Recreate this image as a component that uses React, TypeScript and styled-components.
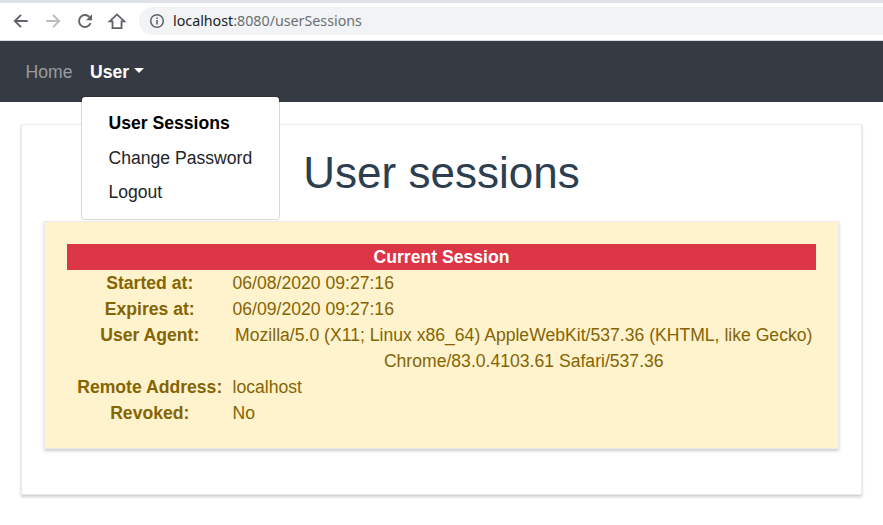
import React from "react";
import styled, { createGlobalStyle } from "styled-components";

const GlobalStyle = createGlobalStyle`
  * { box-sizing: border-box; }
  body {
    margin: 0;
    background: #fff;
    color: #212529;
    font: 17.6px/26px "Liberation Sans", Arial, sans-serif;
  }
`;

const Page = styled.div`
  display: flow-root;
  min-height: 525px;
`;

const TabStrip = styled.div`
  height: 3px;
  background: #dee1e6;
`;

const Toolbar = styled.div`
  display: flex;
  align-items: center;
  height: 38px;
  padding-left: 11px;
  border-bottom: 1px solid #dadce0;
  background: #fff;
`;

const ToolButton = styled.span<{ $disabled?: boolean }>`
  display: flex;
  width: 20px;
  height: 20px;
  margin: 0 12px 1px 0;
  color: ${(p) => (p.$disabled ? "#babcbe" : "#5f6368")};
`;

const AddressBar = styled.div`
  display: flex;
  flex: 1;
  align-items: center;
  height: 28px;
  margin-bottom: 1px;
  padding-left: 10px;
  border-radius: 14px 0 0 14px;
  background: #f1f3f4;
  color: #5f6368;
`;

const Url = styled.span`
  margin-left: 8px;
  color: #6b6f73;
  font: 14.25px/20px "Noto Sans", sans-serif;
`;

const Host = styled.span`
  color: #202124;
`;

const Navbar = styled.nav`
  display: flex;
  align-items: center;
  gap: 17.5px;
  height: 61px;
  padding: 1px 0 0 25.5px;
  background: #363a42;
`;

const NavLink = styled.span<{ $active?: boolean }>`
  color: ${(p) => (p.$active ? "#fff" : "#9a9c9f")};
  font-weight: ${(p) => (p.$active ? 700 : 400)};
`;

const UserItem = styled.div`
  position: relative;
  display: flex;
  align-items: center;
`;

const Caret = styled.span`
  margin: -3px 0 0 5px;
  border: 5px solid transparent;
  border-top-color: #fff;
  border-bottom: 0;
`;

const Menu = styled.div`
  position: absolute;
  top: 37px;
  left: -9px;
  z-index: 1;
  width: 199px;
  height: 124px;
  padding: 9.3px 0;
  border: 1px solid rgba(0, 0, 0, 0.15);
  border-radius: 4px;
  background: #fff;
  background-clip: padding-box;
`;

const MenuItem = styled.div<{ $active?: boolean }>`
  height: 34.4px;
  padding: 4px 26.5px;
  color: ${(p) => (p.$active ? "#000" : "#212529")};
  font-weight: ${(p) => (p.$active ? 700 : 400)};
  white-space: nowrap;
`;

const Card = styled.section`
  padding: 22px;
  border: 1px solid #ebebeb;
  box-shadow: 0 2px 3px rgba(0, 0, 0, 0.2);
`;

const PageCard = styled(Card)`
  height: 371px;
  margin: 22px 21px 0;
`;

const Title = styled.h1`
  margin: 0 0 23px;
  color: #2c3e50;
  font-size: 44px;
  font-weight: 400;
  line-height: 51px;
  text-align: center;
`;

const SessionCard = styled(Card)`
  height: 228px;
  background: #fff3cd;
  color: #856404;
`;

const SessionHeader = styled.div`
  height: 26px;
  background: #dc3545;
  color: #fff;
  font-weight: 700;
  text-align: center;
`;

const Details = styled.dl`
  display: grid;
  grid-template-columns: 165.5px 1fr;
  margin: 0;
`;

const Label = styled.dt`
  font-weight: 700;
  text-align: center;
`;

const Value = styled.dd<{ $centered?: boolean }>`
  margin: 0;
  padding-right: ${(p) => (p.$centered ? "1px" : "0")};
  text-align: ${(p) => (p.$centered ? "center" : "left")};
`;

const BackIcon = () => (
  <svg width="20" height="20" viewBox="0 0 20 20" fill="none" stroke="currentColor" strokeWidth="1.9">
    <path d="M16.7 10H4.2M10 3.8 3.8 10l6.2 6.2" />
  </svg>
);

const ForwardIcon = () => (
  <svg width="20" height="20" viewBox="0 0 20 20" fill="none" stroke="currentColor" strokeWidth="1.9">
    <path d="M3.3 10h12.5M10 3.8l6.2 6.2-6.2 6.2" />
  </svg>
);

const ReloadIcon = () => (
  <svg width="20" height="20" viewBox="0 0 20 20" fill="none" stroke="currentColor" strokeWidth="1.9">
    <path d="M15.6 12.2A6 6 0 1 1 14.3 5.8" />
    <path d="M17 3.2v6.1h-6.1z" fill="currentColor" stroke="none" />
  </svg>
);

const HomeIcon = () => (
  <svg width="20" height="20" viewBox="0 0 20 20" fill="none" stroke="currentColor" strokeWidth="1.8">
    <path d="M2.7 10.4H5.5v6.7h9v-6.7h2.8L10 3.4z" />
  </svg>
);

const InfoIcon = () => (
  <svg width="16" height="16" viewBox="0 0 16 16" fill="none" stroke="currentColor" strokeWidth="1.5">
    <circle cx="8" cy="8" r="6.3" />
    <path d="M8 7.1v4.3M8 4.5V6" strokeWidth="1.6" />
  </svg>
);

const details = [
  { label: "Started at:", value: "06/08/2020 09:27:16" },
  { label: "Expires at:", value: "06/09/2020 09:27:16" },
  {
    label: "User Agent:",
    value: "Mozilla/5.0 (X11; Linux x86_64) AppleWebKit/537.36 (KHTML, like Gecko) Chrome/83.0.4103.61 Safari/537.36",
    centered: true,
  },
  { label: "Remote Address:", value: "localhost" },
  { label: "Revoked:", value: "No" },
];

export default function App() {
  return (
    <Page>
      <GlobalStyle />
      <TabStrip />
      <Toolbar>
        <ToolButton><BackIcon /></ToolButton>
        <ToolButton $disabled><ForwardIcon /></ToolButton>
        <ToolButton><ReloadIcon /></ToolButton>
        <ToolButton><HomeIcon /></ToolButton>
        <AddressBar>
          <InfoIcon />
          <Url><Host>localhost</Host>:8080/userSessions</Url>
        </AddressBar>
      </Toolbar>
      <Navbar>
        <NavLink>Home</NavLink>
        <UserItem>
          <NavLink $active>User</NavLink>
          <Caret />
          <Menu>
            <MenuItem $active>User Sessions</MenuItem>
            <MenuItem>Change Password</MenuItem>
            <MenuItem>Logout</MenuItem>
          </Menu>
        </UserItem>
      </Navbar>
      <PageCard>
        <Title>User sessions</Title>
        <SessionCard>
          <SessionHeader>Current Session</SessionHeader>
          <Details>
            {details.map((d) => (
              <React.Fragment key={d.label}>
                <Label>{d.label}</Label>
                <Value $centered={d.centered}>{d.value}</Value>
              </React.Fragment>
            ))}
          </Details>
        </SessionCard>
      </PageCard>
    </Page>
  );
}
